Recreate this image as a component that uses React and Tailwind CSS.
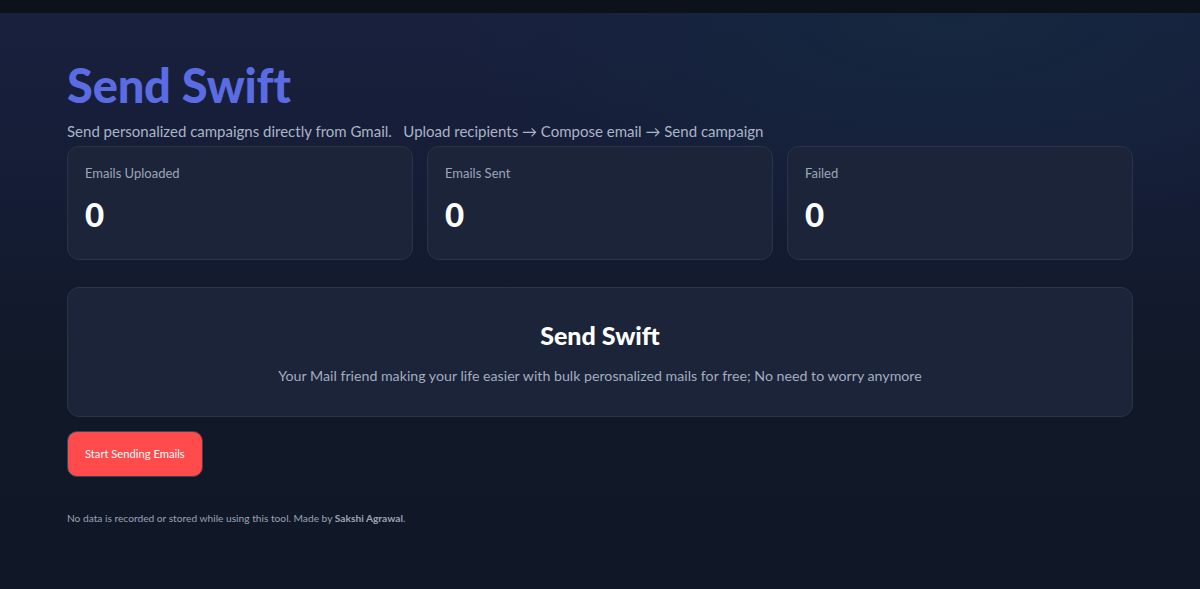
import React from 'react';

const stats = [
  { label: 'Emails Uploaded', value: 0 },
  { label: 'Emails Sent', value: 0 },
  { label: 'Failed', value: 0 },
];

function StatCard({ label, value }) {
  return (
    <div className="h-[114px] rounded-xl border border-[#2a3448] bg-[#1b2438] px-[17px] pt-[17px]">
      <p className="text-[13px] leading-[18px] text-[#9ca6b9]">{label}</p>
      <p className="mt-[12px] text-[33px] font-black leading-[40px] text-white">{value}</p>
    </div>
  );
}

export default function App() {
  return (
    <div className="min-h-[589px] w-full bg-[#111827] font-['Lato',sans-serif]">
      {/* barra superior */}
      <div className="h-[13px] bg-[#0d1119]" />

      <div className="min-h-[576px] bg-[radial-gradient(ellipse_500px_220px_at_950px_0px,#15273f,transparent),linear-gradient(180deg,#18203e_0%,#151d36_30%,#111827_62%,#101726_100%)] px-[67px] pt-[48px] pb-10">
        <h1 className="text-[47px] font-black leading-[48px] tracking-[-0.2px] text-[#5b6ce3]">
          Send Swift
        </h1>
        <p className="mt-[12px] text-[15px] leading-[20px] text-[#aab4c7]">
          Send personalized campaigns directly from Gmail.&nbsp;&nbsp; Upload recipients → Compose email → Send campaign
        </p>

        <div className="mt-[5px] grid grid-cols-3 gap-[14px]">
          {stats.map((s) => (
            <StatCard key={s.label} label={s.label} value={s.value} />
          ))}
        </div>

        <div className="mt-[27px] flex h-[130px] flex-col items-center rounded-xl border border-[#2a3448] bg-[#1b2438] pt-[32px]">
          <h2 className="text-[25px] font-black leading-[30px] text-white">Send Swift</h2>
          <p className="mt-[16px] text-[14.2px] leading-[20px] text-[#a3adc0]">
            Your Mail friend making your life easier with bulk perosnalized mails for free; No need to worry anymore
          </p>
        </div>

        <button className="mt-[14px] h-[46px] rounded-[10px] border border-[#3b4256] bg-[#ff4b4b] px-[17px] text-[11.2px] text-white">
          Start Sending Emails
        </button>

        <p className="mt-[34px] text-[10.2px] leading-[14px] text-[#9aa3b5]">
          No data is recorded or stored while using this tool. Made by <span className="font-bold">Sakshi Agrawal</span>.
        </p>
      </div>
    </div>
  );
}
